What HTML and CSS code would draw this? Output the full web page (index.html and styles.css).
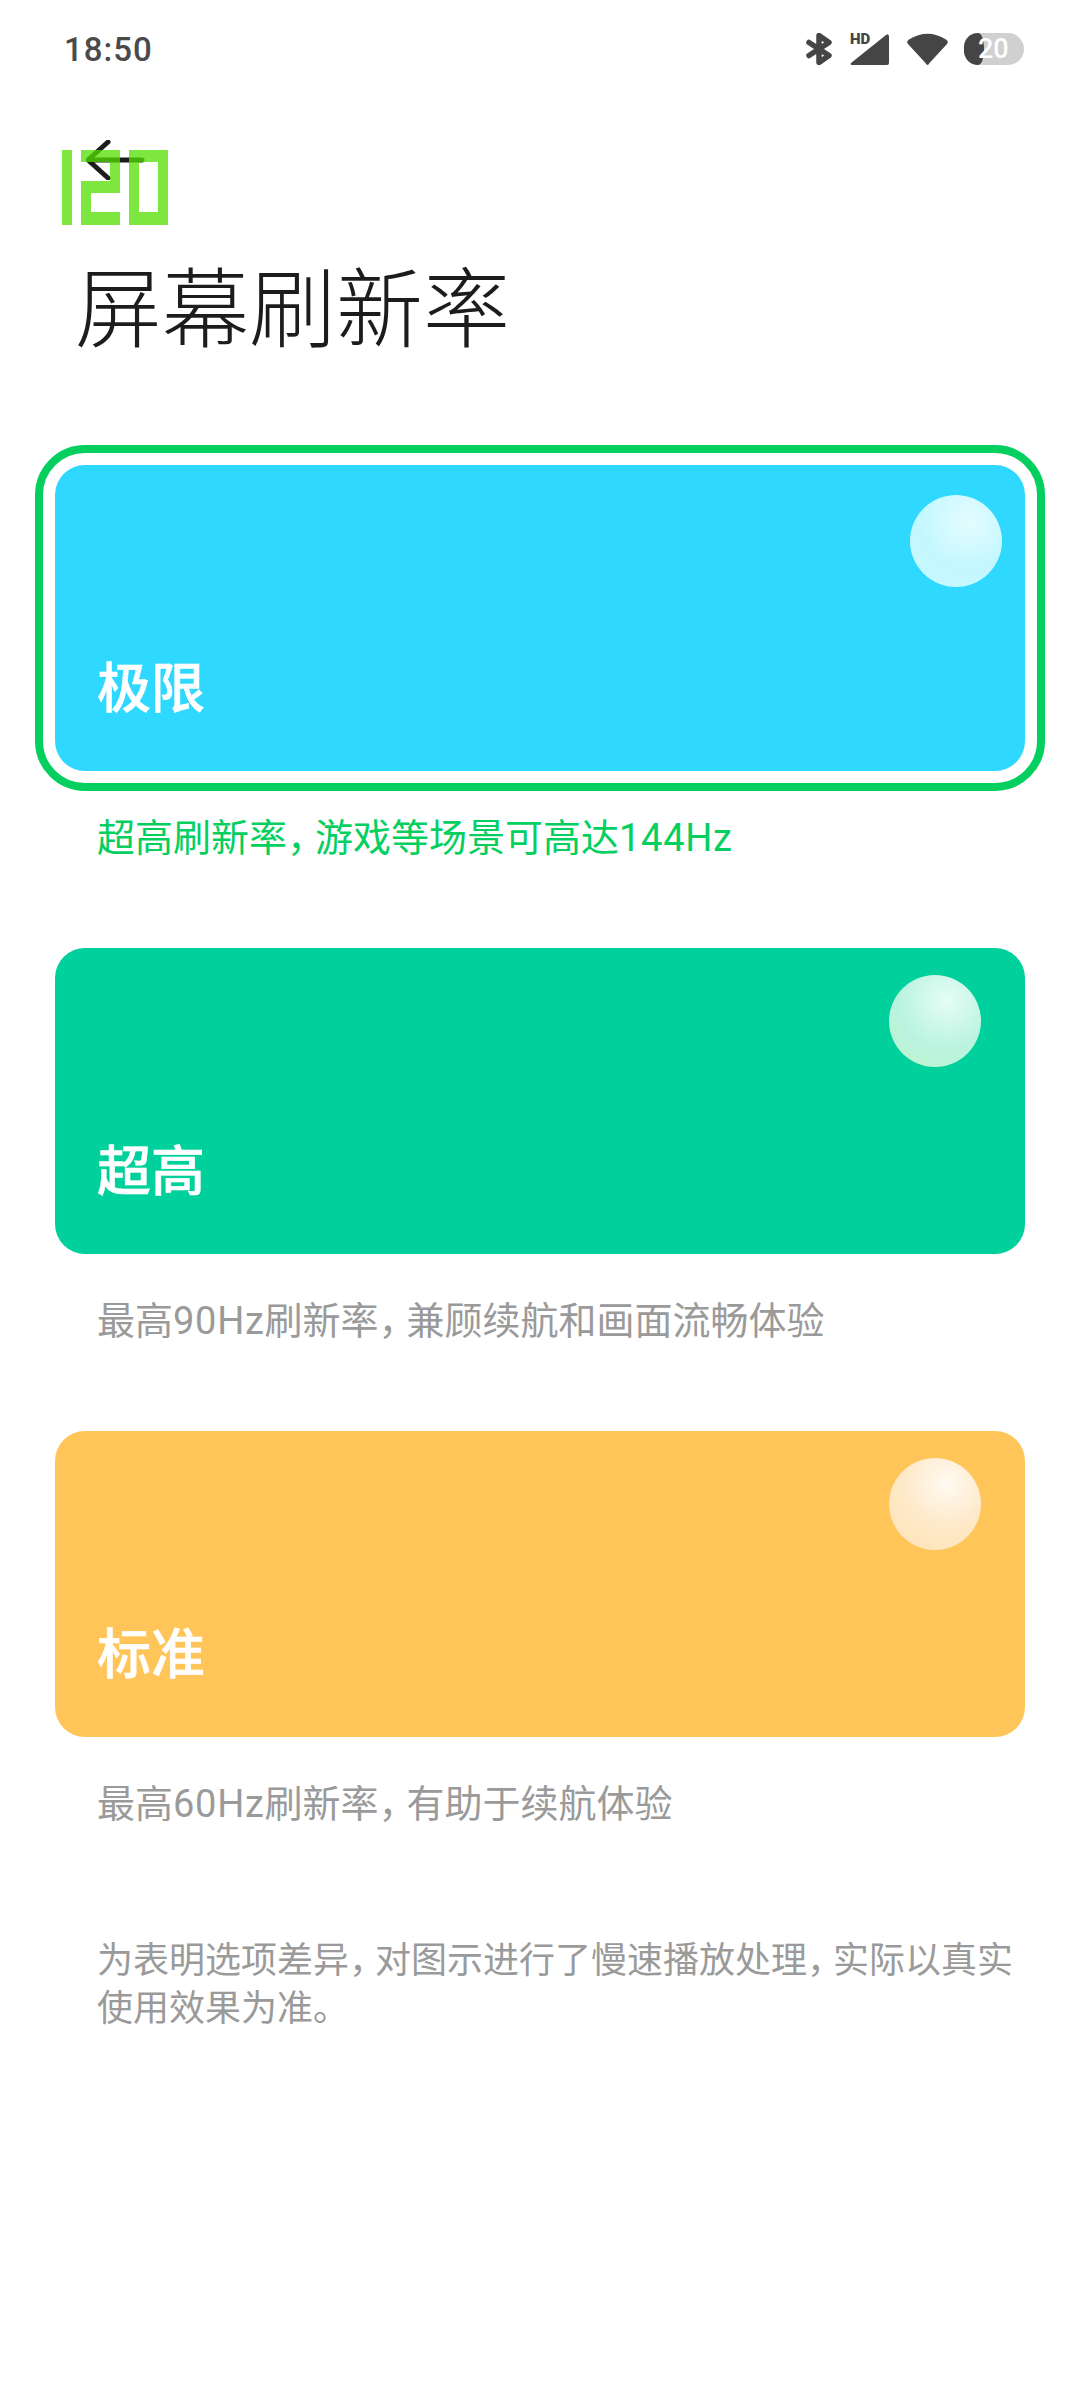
FILE: index.html
```html
<!DOCTYPE html>
<html lang="zh-CN">

<head>
  <meta charset="UTF-8">
  <meta name="viewport" content="width=device-width, initial-scale=1.0">
  <title>屏幕刷新率</title>
  <link rel="stylesheet" href="styles.css">
</head>

<body>
  <!-- fps counter drawn by the system over the app -->
  <div class="fps" role="img" aria-label="120">
    <span class="fps-one"></span>
    <span class="fps-two"></span>
    <span class="fps-zero"></span>
  </div>

  <div class="status-bar">
    <span class="status-time">18:50</span>
    <div class="status-icons">
      <svg class="icon-bt" viewBox="0 0 26 32">
        <path d="M3 9.5 L23 22.5 L13 29.5 L13 2.5 L23 9.5 L3 22.5" fill="none" stroke="#454545" stroke-width="5.5" stroke-linecap="round" stroke-linejoin="round"/>
      </svg>
      <div class="signal">
        <span class="signal-hd">HD</span>
        <svg class="icon-signal" viewBox="0 0 39 31">
          <path d="M36 1 Q39 -1 39 3 L39 29 Q39 31 37 31 L2 31 Q0 31 1 29 Z" fill="#454545"/>
        </svg>
      </div>
      <svg class="icon-wifi" viewBox="0 0 41 32">
        <path d="M20.5 32 Q19.5 32 18.5 30 L1 11 Q-1 8.500 2 6.500 Q20.500 -5 39 6.500 Q42 8.500 40 11 L22.500 30 Q21.500 32 20.500 32 Z" fill="#454545"/>
      </svg>
      <div class="battery">
        <span class="battery-fill"></span>
        <span class="battery-num">20</span>
      </div>
    </div>
  </div>

  <header class="top">
    <svg class="back" viewBox="0 0 60 40">
      <path d="M22 2 L2 20 L22 38 M2 20 L56 20" fill="none" stroke="#1c1c1c" stroke-width="5" stroke-linecap="round" stroke-linejoin="round"/>
    </svg>
    <h1 class="title">屏幕刷新率</h1>
  </header>

  <main class="modes">
    <section class="mode mode-active">
      <div class="card card-blue">
        <span class="ball ball-first"></span>
        <span class="card-name">极限</span>
      </div>
      <p class="mode-desc">超高刷新率<span class="comma">，</span>游戏等场景可高达<span class="latin">144Hz</span></p>
    </section>

    <section class="mode">
      <div class="card card-green">
        <span class="ball"></span>
        <span class="card-name">超高</span>
      </div>
      <p class="mode-desc">最高<span class="latin">90Hz</span>刷新率<span class="comma">，</span>兼顾续航和画面流畅体验</p>
    </section>

    <section class="mode">
      <div class="card card-orange">
        <span class="ball"></span>
        <span class="card-name">标准</span>
      </div>
      <p class="mode-desc">最高<span class="latin">60Hz</span>刷新率<span class="comma">，</span>有助于续航体验</p>
    </section>

    <p class="note">为表明选项差异<span class="comma">，</span>对图示进行了慢速播放处理<span class="comma">，</span>实际以真实使用效果为准。</p>
  </main>
</body>

</html>
```

FILE: styles.css
```css
* {
  box-sizing: border-box;
}

body {
  position: relative;
  width: 1080px;
  height: 2400px;
  margin: 0;
  overflow: hidden;
  background: #fff;
  font-family: Roboto, "Noto Sans CJK SC", sans-serif;
}

/* status bar */
.status-bar {
  display: flex;
  justify-content: space-between;
  align-items: center;
  height: 98px;
  padding: 0 56px 0 64px;
}

.status-time {
  font-size: 33px;
  font-weight: 500;
  color: #4a4a4a;
  letter-spacing: 1px;
}

.status-icons {
  display: flex;
  align-items: center;
}

.icon-bt {
  width: 26px;
  height: 32px;
}

.signal {
  position: relative;
  width: 39px;
  height: 31px;
  margin-left: 18px;
}

.signal-hd {
  position: absolute;
  left: 0;
  top: -4px;
  font-size: 15px;
  line-height: 18px;
  font-weight: 900;
  color: #454545;
}

.icon-signal {
  position: absolute;
  left: 0;
  top: 0;
  width: 39px;
  height: 31px;
}

.icon-wifi {
  width: 41px;
  height: 32px;
  margin-left: 18px;
}

.battery {
  position: relative;
  width: 60px;
  height: 32px;
  margin-left: 16px;
  border-radius: 16px;
  background: #d0d0d0;
}

.battery-fill {
  position: absolute;
  left: 0;
  top: 0;
  width: 20px;
  height: 32px;
  border-radius: 16px 7px 7px 16px / 50%;
  background: #454545;
}

.battery-num {
  position: absolute;
  left: 14px;
  top: 0;
  font-size: 27px;
  line-height: 32px;
  font-weight: 500;
  color: #fff;
}

/* fps overlay */
.fps {
  position: absolute;
  left: 62px;
  top: 150px;
  z-index: 2;
  display: flex;
  gap: 9px;
  height: 75px;
  opacity: 0.75;
}

.fps span {
  display: block;
  height: 75px;
}

.fps-one {
  width: 10px;
  background: #54e000;
}

.fps-two {
  width: 39px;
  background:
    linear-gradient(#54e000, #54e000) 0 0 / 39px 12px no-repeat,
    linear-gradient(#54e000, #54e000) right 0 top 0 / 10px 43px no-repeat,
    linear-gradient(#54e000, #54e000) 0 31px / 39px 12px no-repeat,
    linear-gradient(#54e000, #54e000) 0 31px / 10px 44px no-repeat,
    linear-gradient(#54e000, #54e000) 0 62px / 39px 13px no-repeat;
}

.fps-zero {
  width: 39px;
  border: solid #54e000;
  border-width: 12px 10px 13px;
}

/* header */
.top {
  padding: 42px 0 0 75px;
}

.back {
  display: block;
  width: 60px;
  height: 40px;
  margin-left: 11px;
}

.title {
  margin: 74px 0 0;
  font-size: 87px;
  line-height: 114px;
  font-weight: 300;
  color: #1c1c1c;
}

/* mode list */
.modes {
  padding: 0 55px;
  margin-top: 97px;
}

.mode {
  height: 483px;
}

.card {
  position: relative;
  display: flex;
  align-items: flex-end;
  height: 306px;
  padding: 0 42px 51px;
  border-radius: 30px;
}

.mode-active .card {
  outline: 8px solid #04cf5f;
  outline-offset: 12px;
}

.card-blue {
  background: #2ed8ff;
}

.card-green {
  background: #00d09c;
}

.card-orange {
  background: #ffc559;
}

.card-name {
  font-size: 54px;
  line-height: 60px;
  font-weight: 500;
  color: #fff;
  -webkit-text-stroke: 0.6px #fff;
}

.ball {
  position: absolute;
  top: 27px;
  right: 44px;
  width: 92px;
  height: 92px;
  border-radius: 50%;
}

.ball-first {
  top: 30px;
  right: 23px;
}

.card-blue .ball {
  background: radial-gradient(circle at 63% 28%, #e4fdff 0, #c3f7ff 55%, #caf8ff 100%);
}

.card-green .ball {
  background: radial-gradient(circle at 63% 28%, #e6fdf5 0, #b9f3e0 55%, #bef4c6 100%);
}

.card-orange .ball {
  background: radial-gradient(circle at 63% 28%, #fffaf2 0, #fee9c8 50%, #fde2b3 100%);
}

.mode-desc {
  margin: 41px 0 0 42px;
  font-size: 38px;
  line-height: 52px;
  color: #9a9a9a;
}

.mode-active .mode-desc {
  color: #04cf5f;
}

.comma {
  margin-right: -10px;
}

.latin {
  letter-spacing: 0.7px;
}

.note {
  margin: 23px 0 0 42px;
  font-size: 36px;
  line-height: 48px;
  color: #9a9a9a;
}
```
